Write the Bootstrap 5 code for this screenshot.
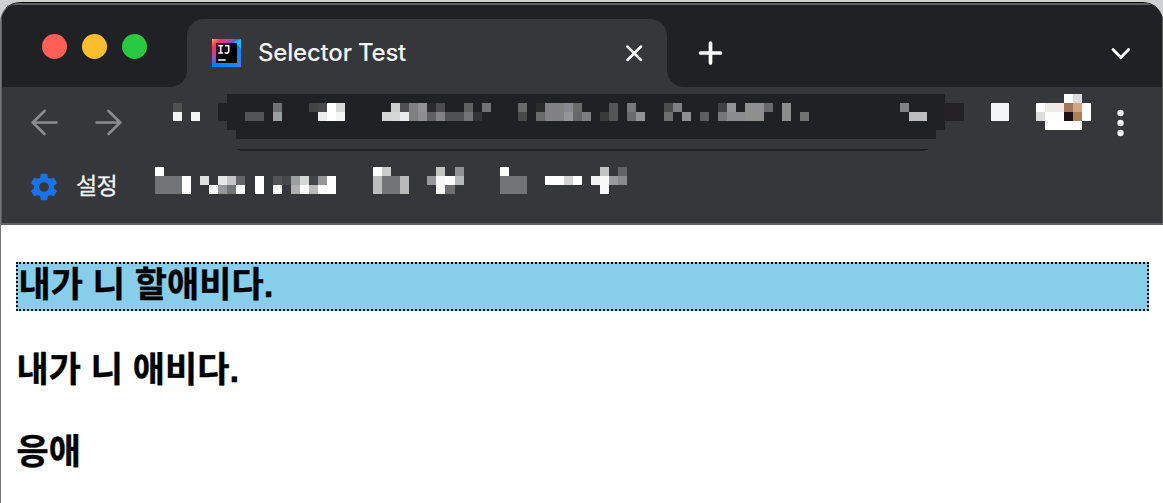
<!DOCTYPE html>
<html lang="ko">
<head>
    <meta charset="UTF-8">
    <meta name="viewport" content="width=device-width, initial-scale=1.0">
    <title>Selector Test</title>
    <link href="https://cdn.jsdelivr.net/npm/bootstrap@5.3.0/dist/css/bootstrap.min.css" rel="stylesheet">
    <style>
        body { background: #cfd0d1; font-family: "Liberation Sans", "Noto Sans CJK KR", sans-serif; height: 503px; padding-top: 2px; overflow: hidden; }
        svg { display: block; flex: none; }
        .browser { height: 501px; background: #fff; border: 1px solid #000; border-bottom: 0; border-left-color: #77787a; border-right: 0; border-radius: 20px 20px 0 0; }
        .chrome-top { background: #36373a; height: 222px; border-bottom: 2px solid #616265; box-shadow: inset 1px 0 #58595b, inset -1px 0 #58595b; }
        .titlebar { background: #202124; height: 84px; border: 2px solid #616264; border-width: 2px 1px 0; padding-left: 40px; }
        .light { width: 25px; height: 25px; border-radius: 50%; margin-top: 29px; margin-right: 15px; }
        .light-red { background: #ff5f57; }
        .light-yellow { background: #febc2e; }
        .light-green { background: #28c840; }
        .tab-item { position: relative; background: #36373a; width: 480px; height: 68px; margin-top: 14px; margin-left: 25px; padding-left: 25px; border-radius: 17px 17px 0 0; }
        .tab-item::before, .tab-item::after { content: ""; position: absolute; bottom: 0; width: 16px; height: 16px; }
        .tab-item::before { left: -16px; background: radial-gradient(circle at 0 0, transparent 15.5px, #36373a 16px); }
        .tab-item::after { right: -16px; background: radial-gradient(circle at 100% 0, transparent 15.5px, #36373a 16px); }
        .tab-title { font: 500 24px/30px Inter, sans-serif; letter-spacing: -.2px; color: #f4f4f5; margin-left: 17px; }
        .bar-icon { margin-top: 14px; }
        .toolbar { height: 64px; padding-left: 29px; }
        .bookmarks { height: 72px; padding-left: 29px; }
        .gear { margin: 0 -1.5px 0 -2px; }
        .bookmark-name { font-size: 23px; line-height: 30px; letter-spacing: -.6px; color: #f1f3f4; -webkit-text-stroke: .3px #f1f3f4; margin-left: 17.5px; margin-right: 1px; padding-bottom: 2px; width: 44px; }
        .page { padding: 37px 14px 0 15px; }
        .line-title { font-size: 35px; line-height: 45px; font-weight: 700; color: #000; letter-spacing: .05px; -webkit-text-stroke: .4px #000; margin-bottom: 37.5px; }
        .line-title span { position: relative; top: -2px; left: .5px; }
        .ancestor { background: #87ceeb; border: 2px dotted #000; }
    </style>
</head>
<body>
    <div class="browser overflow-hidden">
        <header class="chrome-top">
            <div class="titlebar d-flex">
                <div class="light light-red"></div>
                <div class="light light-yellow"></div>
                <div class="light light-green"></div>

                <div class="tab-item d-flex align-items-center">
                    <svg width="29" height="29" viewBox="0 0 29 29">
                        <defs>
                            <linearGradient id="ij" x1="0" y1="0" x2="1" y2="1">
                                <stop offset="0" stop-color="#ffb04a"/>
                                <stop offset=".16" stop-color="#fe315d"/>
                                <stop offset=".34" stop-color="#b743b0"/>
                                <stop offset=".48" stop-color="#087cfa"/>
                                <stop offset=".85" stop-color="#1688fa"/>
                                <stop offset="1" stop-color="#7b62e0"/>
                            </linearGradient>
                            <linearGradient id="ijIn" x1="0" y1="0" x2="1" y2="1">
                                <stop offset="0" stop-color="#3a1230"/>
                                <stop offset=".6" stop-color="#000"/>
                            </linearGradient>
                        </defs>
                        <path fill="url(#ij)" d="M0 0H29V28H0z"/>
                        <path fill="#21b8f8" d="M29 0V10L25 5L22 3z"/>
                        <path fill="url(#ijIn)" d="M4 4H25V24H4z"/>
                        <path fill="none" stroke="#fff" stroke-width="1.6" d="M6.3 6.8H11M8.7 7V14M6.3 14H11M13 6.8H16.7V12Q16.7 14.2 14.5 14.2L12.6 13.6M6.3 21H13.7"/>
                    </svg>
                    <div class="tab-title flex-grow-1">Selector Test</div>
                    <svg class="me-4" width="17" height="17" viewBox="0 0 17 17" stroke="#fff" stroke-width="2.5" stroke-linecap="round">
                        <path d="M1.5 1.5L15 15M15 1.5L1.5 15"/>
                    </svg>
                </div>

                <svg class="bar-icon ms-4 align-self-center" width="40" height="26" viewBox="-6.5 0 40 26" stroke="#fff" stroke-width="3.7" stroke-linecap="round">
                    <path d="M13 3V23M3 13H23"/>
                </svg>
                <svg class="bar-icon ms-auto me-4 align-self-center" width="30" height="20" viewBox="0 0 30 20" fill="none" stroke="#fff" stroke-width="2.8" stroke-linecap="round">
                    <path d="M5 6.5L12.8 14.5L20.6 6.5"/>
                </svg>
            </div>

            <div class="toolbar d-flex">
                <svg width="100" height="64" viewBox="30 87 100 64" fill="none" stroke="#8b8c8e" stroke-width="2.6" stroke-linecap="round" stroke-linejoin="round">
                    <path d="M56.500 122.500H32.500M44.500 111L32.800 122.500L44.500 134M96.500 122.500H120.500M108.500 111L120.200 122.500L108.500 134"/>
                </svg>
                <svg width="1030" height="64" viewBox="130 87 1030 64" shape-rendering="crispEdges">
                    <path fill="#202124" d="M227 94H945V130H936V139H236V130H227V121H218V103H227zM236 149H929L924 151H241z"/>
                    <path fill="#232125" d="M945 103H964V121H945z"/>
                    <g id="address-blocks"></g>
                    <g fill="#f1f3f4" shape-rendering="auto">
                        <circle cx="1120.500" cy="113" r="3.200"/>
                        <circle cx="1120.500" cy="123" r="3.200"/>
                        <circle cx="1120.500" cy="133" r="3.200"/>
                    </g>
                </svg>
            </div>

            <div class="bookmarks d-flex align-items-center">
                <svg class="gear" width="32" height="32" viewBox="0 0 24 24" fill="#1a73e8">
                    <path d="M19.430 12.980c.040-.320.070-.640.070-.980s-.030-.660-.070-.980l2.110-1.650c.190-.150.240-.420.120-.640l-2-3.460c-.120-.220-.390-.300-.610-.220l-2.490 1c-.520-.400-1.080-.730-1.690-.980l-.380-2.650A.488.488 0 0 0 14 2h-4c-.250 0-.460.180-.490.420l-.380 2.650c-.610.250-1.170.590-1.690.980l-2.490-1c-.230-.090-.490 0-.610.220l-2 3.460c-.130.220-.070.490.120.640l2.110 1.650c-.040.320-.070.650-.070.980s.030.660.070.980l-2.110 1.650c-.190.150-.240.420-.120.640l2 3.460c.120.220.390.300.610.220l2.490-1c.520.400 1.080.730 1.690.980l.380 2.650c.030.240.240.420.490.420h4c.250 0 .460-.180.490-.420l.380-2.650c.610-.250 1.170-.590 1.690-.980l2.490 1c.230.090.490 0 .610-.220l2-3.460c.120-.220.070-.490-.120-.640l-2.110-1.650zM12 15.600a3.600 3.600 0 1 1 0-7.200 3.600 3.600 0 0 1 0 7.200z"/>
                </svg>
                <div class="bookmark-name text-nowrap">설정</div>
                <svg width="510" height="72" viewBox="121 151 510 72" shape-rendering="crispEdges">
                    <g id="bookmark-blocks"></g>
                </svg>
            </div>
        </header>

        <main class="page">
            <h3 class="line-title ancestor"><span>내가 니 할애비다.</span></h3>
            <h3 class="line-title"><span>내가 니 애비다.</span></h3>
            <h3 class="line-title"><span>응애</span></h3>
        </main>
    </div>

    <script src="https://cdn.jsdelivr.net/npm/bootstrap@5.3.0/dist/js/bootstrap.bundle.min.js"></script>
    <script>
        // x, width, then one colour per 9px row (0 = empty)
        const address = [
            [173, 9, 0, '#505053', '#f1f3f4'], [191, 9, 0, 0, '#f1f3f4'],
            [245, 19, 0, 0, '#535458'], [273, 9, 0, '#707376', '#9aa0a2'],
            [309, 9, 0, '#444446', 0], [318, 9, 0, '#49494b', '#ededed'],
            [327, 9, 0, '#fff', '#fff'], [336, 9, 0, '#d8d8d8', '#f5f5f5'],
            [382, 9, 0, 0, '#d6d6d6'], [391, 9, 0, '#cecece', '#d6d7d7'],
            [400, 9, 0, '#505052', '#e9edef'], [409, 9, 0, '#808083', '#808083'],
            [418, 9, 0, '#929294', '#8e8e90'], [427, 9, 0, '#2b2b2d', '#606062'],
            [436, 9, 0, '#4c4c4e', '#838385'], [445, 19, 0, 0, '#505153'],
            [464, 9, 0, '#606163', '#737476'], [473, 9, 0, 0, '#333436'],
            [482, 9, 0, '#737375', 0], [518, 9, 0, '#68696b', '#48494b'],
            [536, 9, 0, '#2a2a2c', '#6b6b6d'], [545, 19, 0, '#828284', '#828284'],
            [564, 9, 0, '#88898e', '#939597'], [573, 9, 0, '#6a6b6d', '#656668'],
            [582, 9, 0, 0, '#7d7d7f'], [600, 9, 0, 0, '#3a393b'],
            [609, 9, 0, '#545457', '#545457'], [627, 9, 0, '#77787a', '#6a6b6d'],
            [636, 9, 0, 0, '#929396'], [664, 9, 0, '#4c4c4e', '#6d6e70'],
            [673, 9, 0, '#7f8083', 0], [682, 9, 0, 0, '#8f9092'],
            [700, 9, 0, 0, '#5e5f62'], [718, 9, 0, '#414143', '#767779'],
            [727, 9, 0, '#929394', '#8b8c8e'], [736, 9, 0, 0, '#8b8c8e'],
            [745, 19, 0, '#8f8f91', '#8f908e'], [764, 9, 0, '#69696b', 0],
            [782, 9, 0, '#8b8c8b', '#8b8c8b'], [800, 9, 0, 0, '#727275'],
            [900, 9, 0, '#828284', 0], [909, 18, 0, 0, '#bebebe'],
            [991, 18, 0, '#f1f3f4', '#f1f3f4'], [1036, 9, 0, '#fff', '#dcdcdc'],
            [1045, 19, 0, '#f1ebe5', '#fdfdfd', '#fff'], [1064, 9, '#fff', '#a07860', '#1c1013', '#fff'],
            [1073, 9, '#dcdcdc', '#d2a480', '#ad8059', '#fff'], [1082, 9, 0, '#fff', '#fff']
        ];
        const bookmarks = [
            [155, 9, '#fff', '#737476', '#737476'], [164, 18, 0, '#737476', '#737476'],
            [182, 9, 0, '#fff', '#fff'], [200, 9, 0, '#e0e0e0', 0],
            [209, 9, 0, 0, '#fff'], [218, 9, 0, '#e6e6e6', '#969798'],
            [227, 9, 0, '#c5c5c5', '#737476'], [236, 9, 0, '#656669', '#fff'],
            [255, 9, 0, '#fff', '#fff'], [273, 9, 0, '#535458', '#fff'],
            [282, 9, 0, '#47484b', 0], [291, 9, 0, '#9d9ea0', '#b0b0b1'],
            [300, 9, 0, '#d8d8d8', '#fff'], [309, 9, 0, '#434447', '#bbb'],
            [318, 9, 0, '#979798', '#fff'], [327, 9, 0, '#fff', '#fff'],
            [373, 9, '#fff', '#bdbdbd', '#bdbdbd'], [382, 9, '#ccc', '#737476', '#737476'],
            [391, 9, 0, '#737476', '#737476'], [400, 9, 0, '#bababb', '#bababb'],
            [427, 9, 0, '#97989a', 0], [436, 9, '#c4c4c4', '#f8f8f8', '#f8f8f8'],
            [445, 10, 0, '#fff', '#6e6e71'], [455, 9, '#909195', '#b8b9bb', 0],
            [500, 9, '#fff', '#737476', '#737476'], [509, 18, 0, '#737476', '#737476'],
            [545, 19, 0, '#fff', 0], [564, 9, 0, '#d3d3d3', 0], [573, 9, 0, '#fff', 0],
            [591, 9, 0, '#f2f2f2', 0], [600, 9, '#c4c4c4', '#f9f9f9', '#f9f9f9'],
            [609, 9, 0, '#9a9a9c', 0], [618, 9, '#626267', '#88898b', 0]
        ];

        function drawBlocks(id, blocks, top) {
            document.getElementById(id).innerHTML = blocks.map(([x, w, ...rows]) =>
                rows.map((color, i) => color ? `<rect x="${x}" y="${top + i * 9}" width="${w}" height="9" fill="${color}"/>` : '').join('')
            ).join('');
        }

        drawBlocks('address-blocks', address, 94);
        drawBlocks('bookmark-blocks', bookmarks, 167);
    </script>
</body>
</html>
